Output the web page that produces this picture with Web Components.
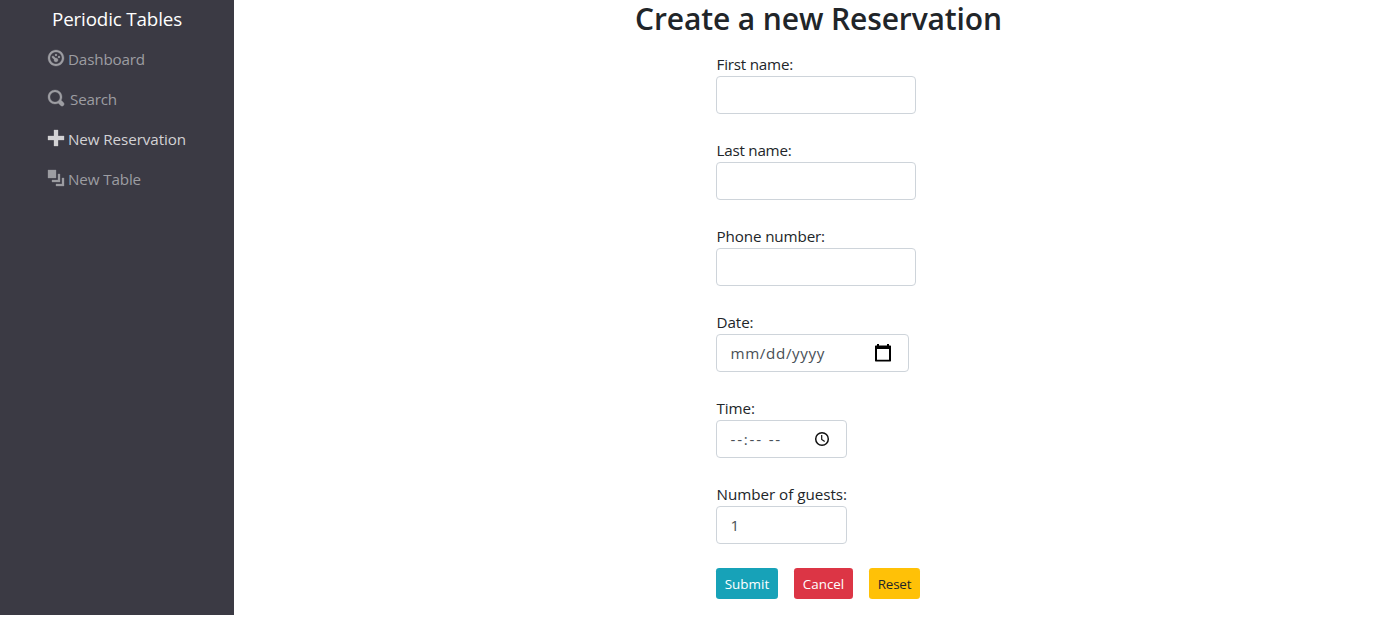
<!DOCTYPE html>
<html lang="en">
<head>
<meta charset="utf-8">
<title>Periodic Tables</title>
<style>
html,body{margin:0;background:#fff}
body{font:15.2px/24px "Open Sans","Noto Sans",sans-serif;color:#212529}
</style>
</head>
<body>
<app-shell>
  <side-nav slot="nav">
    <nav-item icon="dashboard" width="77">Dashboard</nav-item>
    <nav-item icon="search" width="47" indent="2">Search</nav-item>
    <nav-item icon="plus" width="118" active>New Reservation</nav-item>
    <nav-item icon="layers" width="73">New Table</nav-item>
  </side-nav>
  <reservation-form></reservation-form>
</app-shell>
<script>
const define = (name, html, setup) => customElements.define(name, class extends HTMLElement {
  connectedCallback() {
    if (this.shadowRoot) return;
    const t = document.createElement('template');
    t.innerHTML = html;
    this.attachShadow({mode: 'open'}).append(t.content.cloneNode(true));
    if (setup) setup(this, this.shadowRoot);
  }
});

// Tracks a single line of text out to the advance width given by "width".
define('text-run', `<style>:host{display:inline-block;white-space:nowrap}span{display:inline-block}</style><span><slot></slot></span>`, (el, root) => {
  const want = +el.getAttribute('width');
  const span = root.querySelector('span');
  const n = el.textContent.length;
  span.style.letterSpacing = (want - span.getBoundingClientRect().width) / n + 'px';
});

define('app-shell', `<style>
:host{display:grid;grid-template-columns:234px 1fr;height:619px;align-items:start}
main{padding-left:5px}
</style><slot name="nav"></slot><main><slot></slot></main>`);

define('side-nav', `<style>
:host{display:flex;flex-direction:column;height:615px;background:#3b3a44}
header{text-align:center;color:#fff;font-size:18.8px;line-height:30px;height:39px;padding-top:4px;box-sizing:border-box}
nav{display:flex;flex-direction:column;padding-left:47.5px}
</style><header><text-run width="130">Periodic Tables</text-run></header><nav><slot></slot></nav>`);

const icons = {
  dashboard: 'M4 0c-2.2 0-4 1.8-4 4s1.8 4 4 4 4-1.8 4-4-1.8-4-4-4zm0 1c1.66 0 3 1.34 3 3s-1.34 3-3 3-3-1.34-3-3 1.34-3 3-3zm0 1c-.28 0-.5.22-.5.5s.22.5.5.5.5-.22.5-.5-.22-.5-.5-.5zm-1.66 1a.5.5 0 0 0-.19.84l.91.91c-.02.08-.06.16-.06.25 0 .55.45 1 1 1s1-.45 1-1-.45-1-1-1c-.09 0-.17.04-.25.06l-.91-.91a.5.5 0 0 0-.5-.15zm3.16 0c-.28 0-.5.22-.5.5s.22.5.5.5.5-.22.5-.5-.22-.5-.5-.5z',
  search: 'M3.5 0c-1.93 0-3.5 1.57-3.5 3.5s1.57 3.5 3.5 3.5c.59 0 1.17-.14 1.66-.41a1 1 0 0 0 .13.13l1 1a1.02 1.02 0 1 0 1.44-1.44l-1-1a1 1 0 0 0-.16-.13c.27-.49.44-1.06.44-1.66 0-1.93-1.55-3.5-3.5-3.5zm0 1c1.39 0 2.5 1.11 2.5 2.5 0 .66-.24 1.27-.66 1.72l-.16.16c-.44.4-1.03.62-1.68.62-1.39 0-2.5-1.11-2.5-2.5s1.11-2.5 2.5-2.5z',
  plus: 'M3 0v3h-3v2h3v3h2v-3h3v-2h-3v-3h-2z',
  layers: 'M0 0v4h4v-4h-4zm5 2v3h-3v1h4v-4h-1zm2 2v3h-3v1h4v-4h-1z'
};
define('nav-item', `<style>
:host{display:block;color:#9d9da2}
:host([active]){color:#d3d2d5}
a{display:flex;height:40px;align-items:center;gap:4.5px}
svg{width:16px;height:16px;overflow:visible;fill:currentColor;stroke:currentColor;stroke-width:.16;margin-bottom:2px}
</style><a><svg viewBox="0 0 8 8"><path/></svg><span></span></a>`, (el, root) => {
  root.querySelector('path').setAttribute('d', icons[el.getAttribute('icon')]);
  const run = document.createElement('text-run');
  run.setAttribute('width', el.getAttribute('width'));
  run.textContent = el.textContent;
  const span = root.querySelector('span');
  span.style.paddingLeft = (el.getAttribute('indent') || 0) + 'px';
  span.append(run);
});

define('form-field', `<style>
:host{display:block;margin-bottom:24px}
.label{height:24px;padding-left:.5px}
.box{box-sizing:border-box;width:var(--w,200px);height:38px;border:1px solid #ced4da;border-radius:4px;padding:0 16px 0 13.5px;display:flex;align-items:center;justify-content:space-between;color:#495057}
</style><div class="label"><slot name="label"></slot></div><div class="box"><slot></slot></div>`);

define('action-button', `<style>
:host{display:block}
button{display:block;font:13.4px/21px "Open Sans","Noto Sans",sans-serif;height:31px;width:var(--w);padding:1px 0 0;border:0;border-radius:3.2px;background:var(--bg);color:var(--fg,#fff);text-align:center}
</style><button type="button"><slot></slot></button>`);

define('reservation-form', `<style>
:host{display:flex;flex-direction:column;align-items:center}
h1{margin:0 0 14px;padding-left:1px;font-size:30px;line-height:38px;font-weight:600}
form{width:204px}
svg{display:block}
.buttons{display:flex;gap:16px}
.date{margin-top:-1px}
</style>
<h1><text-run width="367">Create a new Reservation</text-run></h1>
<form>
<form-field><text-run slot="label" width="76.5">First name:</text-run></form-field>
<form-field><text-run slot="label" width="75">Last name:</text-run></form-field>
<form-field><text-run slot="label" width="108.5">Phone number:</text-run></form-field>
<form-field style="--w:193px"><text-run slot="label" width="37">Date:</text-run><text-run width="94.5">mm/dd/yyyy</text-run>
<svg class="date" width="18" height="20" viewBox="0 0 18 20"><path d="M3 1h2v1.5h8V1h2v1.5h1.5l.5.5v15l-.5.5h-15L1 18V3l.5-.5H3zM3 6v10.7h12V6z" fill="#000" fill-rule="evenodd"/></svg></form-field>
<form-field style="--w:131px"><text-run slot="label" width="38.5">Time:</text-run><text-run width="51.5">--:-- --</text-run>
<svg width="16" height="16" viewBox="0 0 16 16" fill="none" stroke="#111"><circle cx="8" cy="8" r="6.3" stroke-width="1.5"/><path d="M7.7 4v4.4l3 2" stroke-width="1.2"/></svg></form-field>
<form-field style="--w:131px"><text-run slot="label" width="130.5">Number of guests:</text-run><text-run width="9">1</text-run></form-field>
<div class="buttons">
<action-button style="--w:62px;--bg:#17a2b8"><text-run width="44.5">Submit</text-run></action-button>
<action-button style="--w:59px;--bg:#dc3545"><text-run width="41.5">Cancel</text-run></action-button>
<action-button style="--w:51px;--bg:#ffc107;--fg:#212529"><text-run width="33.5">Reset</text-run></action-button>
</div>
</form>`);
</script>
</body>
</html>
